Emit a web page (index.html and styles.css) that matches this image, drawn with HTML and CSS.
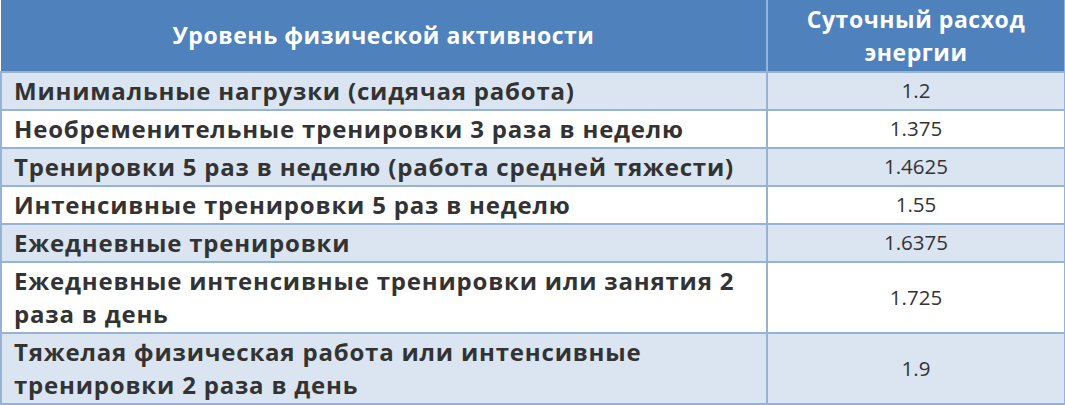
FILE: index.html
```html
<!DOCTYPE html>
<html lang="ru">
<head>
<meta charset="utf-8">
<link rel="stylesheet" href="styles.css">
</head>
<body>
<table class="tbl">
  <colgroup><col class="c1"><col class="c2"></colgroup>
  <thead>
    <tr><th>Уровень физической активности</th><th>Суточный расход энергии</th></tr>
  </thead>
  <tbody>
    <tr class="alt"><td class="lbl">Минимальные нагрузки (сидячая работа)</td><td class="num">1.2</td></tr>
    <tr><td class="lbl">Необременительные тренировки 3 раза в неделю</td><td class="num">1.375</td></tr>
    <tr class="alt"><td class="lbl">Тренировки 5 раз в неделю (работа средней тяжести)</td><td class="num">1.4625</td></tr>
    <tr><td class="lbl">Интенсивные тренировки 5 раз в неделю</td><td class="num">1.55</td></tr>
    <tr class="alt"><td class="lbl">Ежедневные тренировки</td><td class="num">1.6375</td></tr>
    <tr><td class="lbl">Ежедневные интенсивные тренировки или занятия 2 раза в день</td><td class="num">1.725</td></tr>
    <tr class="alt"><td class="lbl">Тяжелая физическая работа или интенсивные тренировки 2 раза в день</td><td class="num">1.9</td></tr>
  </tbody>
</table>
</body>
</html>
```
FILE: styles.css
```css
html, body { margin: 0; padding: 0; background: #ffffff; }
.tbl {
  border-collapse: collapse;
  width: 1064px;
  table-layout: fixed;
  font-family: "Open Sans", "Noto Sans", sans-serif;
  color: #333333;
}
.c1 { width: 766px; }
.c2 { width: 298px; }
.tbl th {
  background: #4f81bd;
  color: #ffffff;
  font-weight: 700;
  font-size: 23px;
  letter-spacing: 0.55px;
  line-height: 33px;
  height: 71px;
  padding: 0 30px;
  text-align: center;
  border: 2px solid #95b3d7;
  border-top: none;
  border-left: none;
}
.tbl td {
  border: 2px solid #95b3d7;
  font-size: 20px;
  line-height: 33px;
  padding: 1px 12px 2px 12px;
  vertical-align: middle;
}
.tbl td.lbl { font-weight: 700; font-size: 24px; letter-spacing: 0.8px; }
.tbl td.num { text-align: center; font-weight: 400; font-size: 20.5px; }
.tbl tr.alt td { background: #dbe5f1; }
```
